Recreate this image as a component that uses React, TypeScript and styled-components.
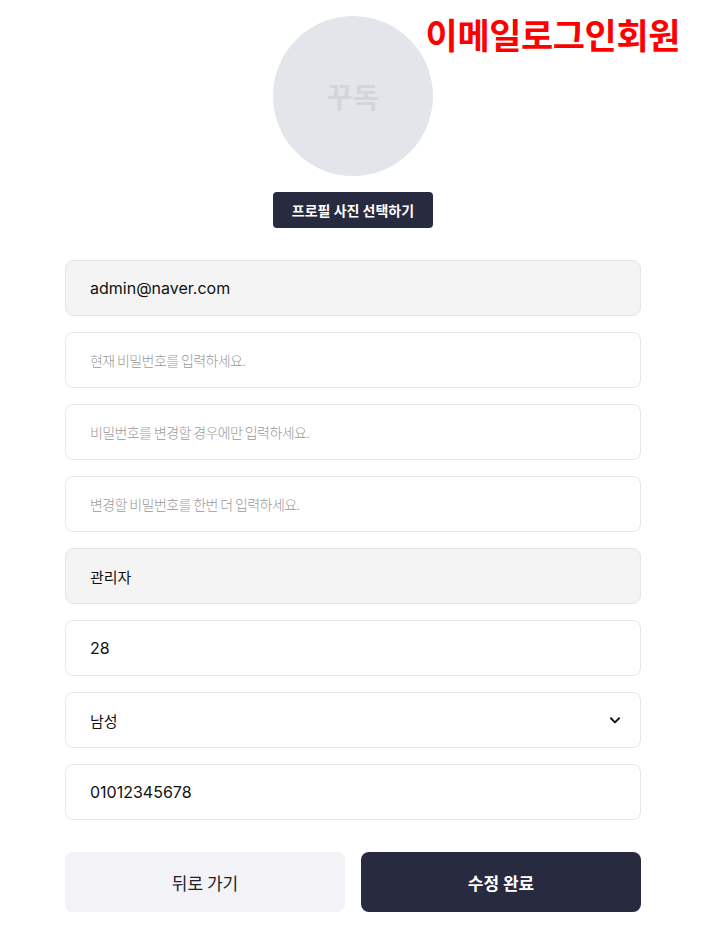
import React from 'react'
import styled, { createGlobalStyle } from 'styled-components'

const GlobalStyle = createGlobalStyle`
  body {
    margin: 0;
    background: #fff;
    font-family: Inter, 'Noto Sans CJK KR', sans-serif;
  }
  * { box-sizing: border-box; }
`

const Page = styled.div`
  position: relative;
  width: 704px;
  min-height: 930px;
  padding: 16px 0 0 2px;
  display: flex;
  flex-direction: column;
  align-items: center;
`

const Title = styled.h1`
  position: absolute;
  top: 8px;
  right: 24px;
  margin: 0;
  font-family: 'Noto Sans CJK KR', sans-serif;
  font-size: 35px;
  font-weight: 700;
  color: #ff0000;
  letter-spacing: -0.4px;
`

const Profile = styled.div`
  display: flex;
  flex-direction: column;
  align-items: center;
  gap: 16px;
`

const Avatar = styled.div`
  width: 160px;
  height: 160px;
  border-radius: 50%;
  background: #e2e5e9;
  display: flex;
  align-items: center;
  justify-content: center;
  font-family: 'Noto Sans CJK KR', sans-serif;
  font-weight: 700;
  font-size: 28px;
  color: #d2d5da;
  letter-spacing: 0.5px;
`

const PickButton = styled.button`
  width: 160px;
  height: 36px;
  border: none;
  border-radius: 4px;
  background: #282a40;
  color: #fff;
  font-family: 'Noto Sans CJK KR', sans-serif;
  font-weight: 700;
  font-size: 14px;
  cursor: pointer;
`

const Form = styled.form`
  width: 576px;
  margin-top: 32px;
  display: flex;
  flex-direction: column;
  gap: 16px;
`

const Field = styled.input<{ $locked?: boolean; $korean?: boolean }>`
  width: 100%;
  height: 56px;
  padding: 0 24px;
  border: 1px solid #e6e6e6;
  border-radius: 8px;
  background: ${p => (p.$locked ? '#f4f4f4' : '#fff')};
  font-family: ${p => (p.$korean ? "'Noto Sans CJK KR', sans-serif" : "Inter, 'Noto Sans CJK KR', sans-serif")};
  font-size: ${p => (p.$korean ? '15px' : '16px')};
  color: #111;
  outline: none;

  &::placeholder {
    font-family: 'Noto Sans CJK KR', sans-serif;
    font-size: 14px;
    font-weight: 300;
    letter-spacing: -0.6px;
    color: #9a9a9a;
  }
`

const SelectWrap = styled.div`
  position: relative;
`

const Select = styled.select`
  width: 100%;
  height: 56px;
  padding: 0 24px;
  border: 1px solid #e6e6e6;
  border-radius: 8px;
  background: #fff;
  appearance: none;
  font-family: 'Noto Sans CJK KR', sans-serif;
  font-size: 15px;
  color: #111;
  outline: none;
`

const Chevron = styled.svg`
  position: absolute;
  right: 19px;
  top: 21px;
  width: 14px;
  height: 14px;
  pointer-events: none;
`

const Actions = styled.div`
  width: 576px;
  margin-top: 32px;
  display: grid;
  grid-template-columns: 1fr 1fr;
  gap: 16px;
`

const ActionButton = styled.button<{ $primary?: boolean }>`
  height: 60px;
  border: none;
  border-radius: 8px;
  background: ${p => (p.$primary ? '#282a40' : '#f3f3f7')};
  color: ${p => (p.$primary ? '#fff' : '#222')};
  font-family: 'Noto Sans CJK KR', sans-serif;
  font-size: 17px;
  font-weight: ${p => (p.$primary ? 700 : 400)};
  cursor: pointer;
`

export default function App() {
  return (
    <Page>
      <GlobalStyle />
      <Title>이메일로그인회원</Title>
      <Profile>
        <Avatar>꾸독</Avatar>
        <PickButton type="button">프로필 사진 선택하기</PickButton>
      </Profile>
      <Form onSubmit={e => e.preventDefault()}>
        <Field $locked readOnly value="admin@naver.com" />
        <Field type="password" placeholder="현재 비밀번호를 입력하세요." />
        <Field type="password" placeholder="비밀번호를 변경할 경우에만 입력하세요." />
        <Field type="password" placeholder="변경할 비밀번호를 한번 더 입력하세요." />
        <Field $locked $korean readOnly value="관리자" />
        <Field readOnly value="28" />
        <SelectWrap>
          <Select defaultValue="male">
            <option value="male">남성</option>
            <option value="female">여성</option>
          </Select>
          <Chevron viewBox="0 0 24 24" fill="none" stroke="#111" strokeWidth="3.2" strokeLinecap="round" strokeLinejoin="round">
            <path d="M5 9l7 7 7-7" />
          </Chevron>
        </SelectWrap>
        <Field readOnly value="01012345678" />
      </Form>
      <Actions>
        <ActionButton type="button">뒤로 가기</ActionButton>
        <ActionButton type="button" $primary>수정 완료</ActionButton>
      </Actions>
    </Page>
  )
}
